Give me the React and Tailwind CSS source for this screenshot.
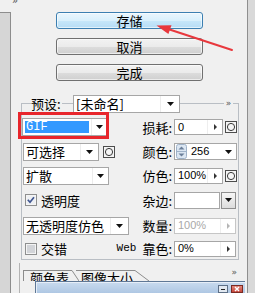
import React from 'react';

// ── Small drawings ─────────────────────────────────────────

function Caret() {
  return (
    <svg width="7" height="4" viewBox="0 0 7 4" className="shrink-0">
      <path d="M0 0h7L3.5 4z" fill="#111" />
    </svg>
  );
}

function Tri({ color = '#333' }) {
  return (
    <svg width="3" height="6" viewBox="0 0 3 6" className="shrink-0">
      <path d="M0 0l3 3-3 3z" fill={color} />
    </svg>
  );
}

function CircleBtn() {
  return (
    <svg width="12" height="12" viewBox="0 0 12 12" className="shrink-0">
      <rect x="0.5" y="0.5" width="11" height="11" fill="#f6f6f6" stroke="#4d4d4d" />
      <circle cx="6" cy="6" r="3.6" fill="none" stroke="#3a3a3a" />
    </svg>
  );
}

function Spinner() {
  return (
    <svg width="11" height="15" viewBox="0 0 11 15" className="shrink-0">
      <rect x="0.5" y="0.5" width="10" height="14" rx="2" fill="#dbe6f2" stroke="#9fb2c8" />
      <line x1="1" y1="7.5" x2="10" y2="7.5" stroke="#9fb2c8" />
      <path d="M2.5 5.5h6L5.5 2.5z" fill="#6b7f99" />
      <path d="M2.5 9.5h6L5.5 12.5z" fill="#6b7f99" />
    </svg>
  );
}

function Check({ checked }) {
  return (
    <svg width="12" height="12" viewBox="0 0 12 12" className="shrink-0">
      <rect x="0.5" y="0.5" width="11" height="11" fill="#f4f4f4" stroke="#8e8f8f" />
      <rect x="2" y="2" width="8" height="8" fill={checked ? '#eef0f3' : '#d2d4d8'} />
      {checked && <path d="M2.8 5.8l2.2 2.4 4-5" stroke="#3f5590" strokeWidth="1.7" fill="none" />}
    </svg>
  );
}

// ── Controls ──────────────────────────────────────────────

function Btn({ children, primary }) {
  return (
    <div
      className={`h-[17px] flex items-center justify-center rounded-[3px] border text-[13px] leading-[15px] shadow-[inset_0_0_0_1px_rgba(255,255,255,0.6)] ${
        primary
          ? 'border-[#3c7fb1] bg-[image:linear-gradient(#eaf6fd,#d9f0fc_50%,#c7e7fa_51%,#b6ddf5)]'
          : 'border-[#707070] bg-[image:linear-gradient(#f2f2f2,#ebebeb_50%,#dddddd_51%,#cfcfcf)]'
      }`}
    >
      {children}
    </div>
  );
}

function Select({ value, w, selected, arrowW = 'w-[16px]' }) {
  return (
    <div className={`flex h-[18px] shrink-0 bg-white border border-[#a6a6a6] ${w}`}>
      {selected ? (
        <div className="flex-1 m-[2px] bg-[#3399ff] text-white flex items-center pl-[1px] font-['Liberation_Mono',monospace] text-[12px]">
          {value}
        </div>
      ) : (
        <div className="flex-1 flex items-center pl-[2px] whitespace-nowrap overflow-hidden">{value}</div>
      )}
      <div className={`${arrowW} flex items-center justify-center border-l border-[#ececec]`}>
        <Caret />
      </div>
    </div>
  );
}

function NumBox({ value, w, disabled }) {
  return (
    <div
      className={`flex h-[16px] shrink-0 bg-white border ${w} ${
        disabled ? 'border-[#c6c6c6] text-[#a8a8a8]' : 'border-[#a6a6a6] text-black'
      }`}
    >
      <div className="flex-1 flex items-center pl-[3px] font-['Liberation_Sans',sans-serif] text-[11px]">{value}</div>
      <div className="w-[15px] flex items-center justify-center border-l border-[#eeeeee]">
        <Tri color={disabled ? '#b5b5b5' : '#333'} />
      </div>
    </div>
  );
}

function Row({ h, left, label, children }) {
  return (
    <div className={`flex items-center ${h}`}>
      <div className="w-[117px] shrink-0 flex items-center">{left}</div>
      <div className="w-[32px] shrink-0 flex justify-end items-center whitespace-nowrap">{label}</div>
      <div className="ml-[2px] flex items-center gap-[2px]">{children}</div>
    </div>
  );
}

// ── App ───────────────────────────────────────────────────

export default function App() {
  return (
    <div className="relative flex w-[255px] h-[293px] overflow-hidden bg-[#f0f0f0] text-[13px] leading-[15px] text-black font-['Noto_Sans_CJK_SC',sans-serif]">
      {/* 预览区边缘 */}
      <div className="w-[11px] shrink-0 flex flex-col">
        <div className="h-[12px]" />
        <div className="flex-1 bg-[#d6d6d6] border-t border-r border-[#8d8d8d]" />
      </div>

      {/* 设置面板 */}
      <div className="flex-1 min-w-0 flex flex-col">
        <div className="h-[14px] pl-[1px] text-[10px] leading-[2px] text-[#555] font-['DejaVu_Sans',sans-serif]">»</div>

        <div className="flex flex-col gap-[9px] ml-[45px] w-[147px]">
          <Btn primary>存储</Btn>
          <Btn>取消</Btn>
          <Btn>完成</Btn>
        </div>

        {/* 预设 分组 */}
        <div className="mt-[22px] ml-[10px] w-[218px] border border-[#b9bec4] flex flex-col">
          <div className="-mt-[10px] h-[19px] flex items-center">
            <span className="ml-[9px] w-[31px] bg-[#f0f0f0] whitespace-nowrap">预设:</span>
            <div className="ml-[11px]">
              <Select value="[未命名]" w="w-[107px]" arrowW="w-[19px]" />
            </div>
            <span className="ml-auto mr-[5px] w-[9px] text-center bg-[#f0f0f0] text-[9px] text-[#555] font-['DejaVu_Sans',sans-serif]">»</span>
          </div>

          <div className="mt-[2px] pl-[1px] flex flex-col">
            <Row
              h="h-[24px]"
              left={
                <div className="relative -ml-[1px]">
                  <Select value="GIF" w="w-[85px]" selected arrowW="w-[15px]" />
                  <div className="absolute -left-[4px] -right-[2px] -top-[6px] -bottom-[3px] border-[3px] border-[#e8262c]" />
                </div>
              }
              label="损耗:"
            >
              <NumBox value="0" w="w-[49px]" />
              <CircleBtn />
            </Row>

            <Row
              h="h-[25px]"
              left={
                <div className="flex items-center gap-[4px]">
                  <Select value="可选择" w="w-[76px]" arrowW="w-[18px]" />
                  <CircleBtn />
                </div>
              }
              label="颜色:"
            >
              <div className="flex items-center h-[17px] w-[63px] bg-white border border-[#a6a6a6]">
                <div className="ml-[1px]">
                  <Spinner />
                </div>
                <span className="ml-[4px] flex-1 font-['Liberation_Sans',sans-serif] text-[11px]">256</span>
                <div className="w-[16px] flex items-center justify-center">
                  <Caret />
                </div>
              </div>
            </Row>

            <Row h="h-[23px]" left={<Select value="扩散" w="w-[86px]" arrowW="w-[16px]" />} label="仿色:">
              <NumBox value="100%" w="w-[49px]" />
              <CircleBtn />
            </Row>

            <Row
              h="h-[26px]"
              left={
                <div className="flex items-center ml-[2px] gap-[4px]">
                  <Check checked />
                  <span>透明度</span>
                </div>
              }
              label="杂边:"
            >
              <div className="flex items-center gap-[1px]">
                <div className="h-[17px] w-[46px] bg-white border border-[#a6a6a6]" />
                <div className="h-[17px] w-[15px] flex items-center justify-center border border-[#8e8e8e] bg-[image:linear-gradient(#f6f6f6,#dcdcdc)]">
                  <Caret />
                </div>
              </div>
            </Row>

            <Row h="h-[25px]" left={<Select value="无透明度仿色" w="w-[106px]" arrowW="w-[18px]" />} label="数量:">
              <NumBox value="100%" w="w-[62px]" disabled />
            </Row>

            <Row
              h="h-[21px]"
              left={
                <div className="flex items-center ml-[2px] gap-[4px]">
                  <Check />
                  <span>交错</span>
                </div>
              }
              label={
                <>
                  <span className="mr-[6px] font-['Liberation_Mono',monospace] text-[11px]">Web</span>
                  <span>靠色:</span>
                </>
              }
            >
              <NumBox value="0%" w="w-[62px]" />
            </Row>
          </div>
        </div>

        {/* 颜色表 / 图像大小 */}
        <div className="flex-1 mt-[3px] ml-[8px] border-l border-[#b3b3b3] flex flex-col">
          <div className="h-[18px] flex items-end pl-[3px]">
            <div className="flex items-start h-[11px]">
              <div className="h-full pl-[6px] pr-[3px] border-t border-l border-[#8c8c8c] overflow-hidden leading-[14px]">颜色表</div>
              <svg width="7" height="11" viewBox="0 0 7 11" className="shrink-0">
                <path d="M0 0.5L7 11" stroke="#8c8c8c" />
              </svg>
              <div className="h-full -ml-[3px] pl-[5px] pr-[2px] border-t border-[#8c8c8c] overflow-hidden leading-[14px]">图像大小</div>
              <svg width="14" height="11" viewBox="0 0 14 11" className="shrink-0">
                <path d="M0 0.5L14 11" stroke="#8c8c8c" />
              </svg>
            </div>
            <span className="ml-auto mr-[10px] mb-[4px] text-[9px] leading-[9px] text-[#555] font-['DejaVu_Sans',sans-serif]">»</span>
          </div>
          <div className="flex-1 flex pl-[15px]">
            <div className="flex-1 mr-[2px] flex justify-end items-start gap-[3px] pt-[3px] pr-[2px] border-t border-l border-[#5f7896] bg-[image:linear-gradient(#c9dbef,#aec7e3)] shadow-[inset_1px_1px_0_#e6eef8]">
              <div className="w-[10px] h-[8px] flex items-center justify-center border border-[#5d6f86] bg-[#e2e9f1]">
                <div className="w-[4px] h-[1px] bg-[#222]" />
              </div>
              <div className="w-[12px] h-[8px] flex items-center justify-center border border-[#7a2a22] bg-[image:linear-gradient(#e3877b,#c7473c)]">
                <svg width="6" height="6" viewBox="0 0 6 6">
                  <path d="M1 1l4 4M5 1L1 5" stroke="#fff" strokeWidth="1.4" />
                </svg>
              </div>
            </div>
          </div>
        </div>
      </div>

      {/* 右侧边框 */}
      <div className="w-[8px] shrink-0 border-l border-[#8f8f8f] bg-[#d9d9d9]" />

      {/* 红色箭头标注 */}
      <svg className="absolute inset-0 pointer-events-none" width="255" height="293" viewBox="0 0 255 293">
        <line x1="232" y1="50" x2="168" y2="29" stroke="#e8383d" strokeWidth="2" strokeLinecap="round" />
        <path d="M156.5 25.5L171.5 25.2L168.4 34Z" fill="#e8383d" />
      </svg>
    </div>
  );
}
